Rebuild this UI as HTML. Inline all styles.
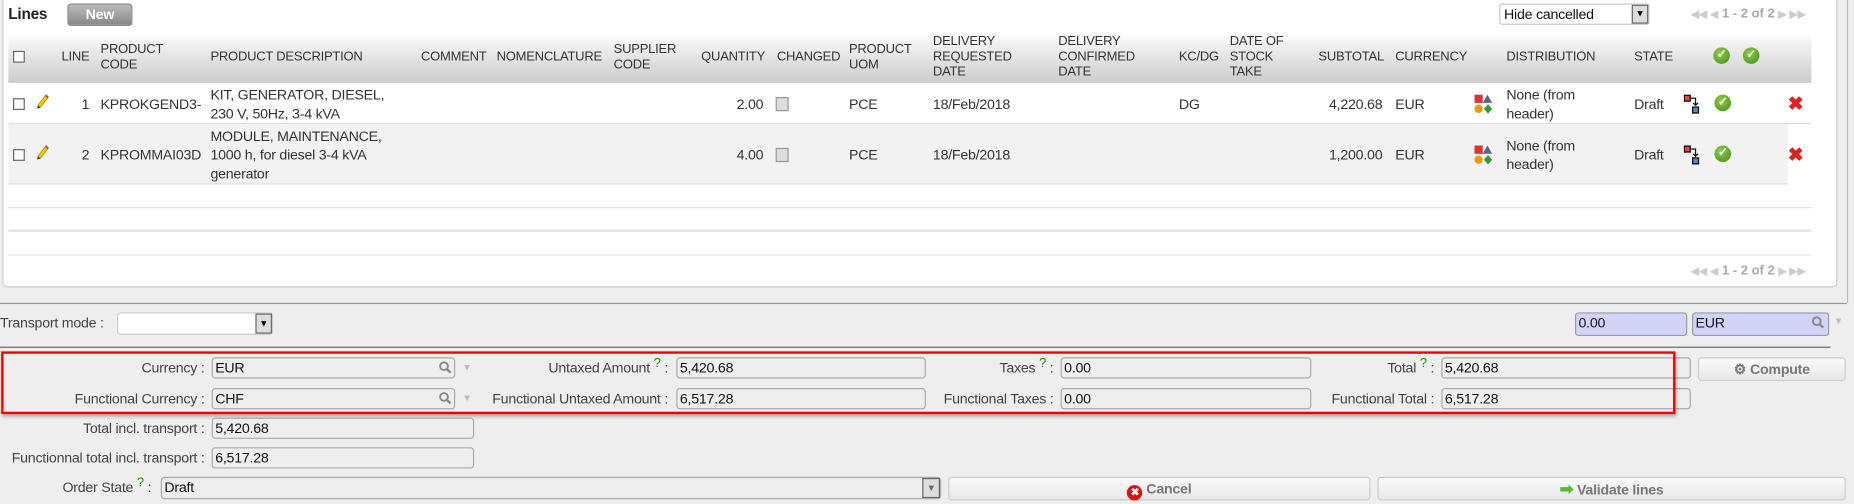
<!DOCTYPE html>
<html><head><meta charset="utf-8"><style>
html,body{margin:0;padding:0;width:1854px;height:504px;overflow:hidden;background:#efeeef}
#s{position:absolute;left:0;top:0;width:1568px;height:426px;transform:scale(1.18240,1.18310);transform-origin:0 0;font-family:"Liberation Sans",Arial,sans-serif;color:#333;font-size:12px;letter-spacing:-0.2px}
.a{position:absolute;white-space:nowrap}
.h{position:absolute;font-size:11px;color:#333;line-height:13px;text-transform:uppercase}
.f{position:absolute;height:18px;border:1px solid #aaa;border-radius:3px;background:#efeeef;box-sizing:border-box;font-size:12px;line-height:17px;padding-left:2px;color:#111}
.lb{position:absolute;text-align:right;font-size:12px;color:#444;line-height:18px;white-space:nowrap}
.q{color:#2a8a00;font-size:11px;vertical-align:top;position:relative;top:-4px}
.btn{position:absolute;height:19px;border:1px solid #ccc;border-radius:3px;background:linear-gradient(#fafafa,#e8e8e8);box-sizing:border-box;text-align:center;font-weight:bold;color:#777;font-size:12px;line-height:18px}
.chk{position:absolute;width:8px;height:8px;border:1px solid #666;background:#fff}
.ok{position:absolute;width:14px;height:14px;border-radius:50%;background:radial-gradient(circle at 40% 35%,#8fcf4a,#3f8a12);color:#fff;font-size:10px;line-height:14px;text-align:center;font-weight:bold}
.pg{position:absolute;font-size:11px;font-weight:bold;color:#aaa;letter-spacing:0}
.pg i{font-style:normal;color:#ccc;font-size:9px}
</style></head><body><div id="s">
<div class="a" style="left:2px;top:-3px;width:1550px;height:244px;background:#fff;border:1px solid #ccc;border-radius:4px"></div>
<div class="a" style="left:1562px;top:0;width:1px;height:256px;background:#bbb"></div>
<div class="a" style="left:7px;top:4px;font-weight:bold;font-size:13px;color:#222">Lines</div>
<div class="a" style="left:57px;top:3px;width:53px;height:17px;border:1px solid #888;border-radius:3px;background:linear-gradient(#bbb,#888);color:#fff;font-weight:bold;text-align:center;line-height:16px;font-size:12px">New</div>
<div class="a" style="left:1268px;top:3px;width:127px;height:18px;border:1px solid #ccc;border-radius:2px;background:#fff;font-size:12px;line-height:17px;padding-left:3px;box-sizing:border-box;color:#111">Hide cancelled</div>
<div class="a" style="left:1380px;top:4px;width:14px;height:16px;background:#ddd;border:1px solid #666;box-sizing:border-box;font-size:8px;text-align:center;line-height:14px;color:#000">▼</div>
<div class="pg" style="left:1430px;top:6px"><i>◀◀ ◀</i> 1 - 2 of 2 <i>▶ ▶▶</i></div>
<div class="a" style="left:7px;top:28px;width:1525px;height:42px;background:linear-gradient(#fff,#f2f2f2 20%,#ccc)"></div>
<div class="chk" style="left:11px;top:43px"></div>
<div class="h" style="left:52px;top:42px">Line</div>
<div class="h" style="left:85px;top:36px">Product<br>code</div>
<div class="h" style="left:178px;top:42px">Product description</div>
<div class="h" style="left:356px;top:42px">Comment</div>
<div class="h" style="left:420px;top:42px">Nomenclature</div>
<div class="h" style="left:519px;top:36px">Supplier<br>code</div>
<div class="h" style="left:593px;top:42px">Quantity</div>
<div class="h" style="left:657px;top:42px">Changed</div>
<div class="h" style="left:718px;top:36px">Product<br>UOM</div>
<div class="h" style="left:789px;top:29px">Delivery<br>requested<br>date</div>
<div class="h" style="left:895px;top:29px">Delivery<br>confirmed<br>date</div>
<div class="h" style="left:997px;top:42px">KC/DG</div>
<div class="h" style="left:1040px;top:29px">Date of<br>stock<br>take</div>
<div class="h" style="left:1115px;top:42px">Subtotal</div>
<div class="h" style="left:1180px;top:42px">Currency</div>
<div class="h" style="left:1274px;top:42px">Distribution</div>
<div class="h" style="left:1382px;top:42px">State</div>
<div class="ok" style="left:1449px;top:40px">✓</div>
<div class="ok" style="left:1474px;top:40px">✓</div>
<div class="a" style="left:7px;top:104px;width:1525px;height:1px;background:#ddd"></div>
<div class="a" style="left:7px;top:105px;width:1505px;height:50px;background:#f2f2f2;border-bottom:1px solid #ddd"></div>
<div class="a" style="left:7px;top:175px;width:1525px;height:1px;background:#e4e4e4"></div>
<div class="a" style="left:7px;top:194px;width:1525px;height:2px;background:#e4e4e4"></div>
<div class="a" style="left:7px;top:215px;width:1525px;height:1px;background:#e4e4e4"></div>
<div class="pg" style="left:1430px;top:223px"><i>◀◀ ◀</i> 1 - 2 of 2 <i>▶ ▶▶</i></div>

<div class="chk" style="left:11px;top:83px"></div>
<svg class="a" style="left:30px;top:79px" width="12" height="14"><path d="M9 1 L11 3 L4 12 L2 10Z" fill="#f0c800" stroke="#a80" stroke-width=".6"/><path d="M9 1 L11 3 L10.2 4 L8.2 2Z" fill="#d33"/><path d="M2 10 L4 12 L1.5 13Z" fill="#333"/></svg>
<div class="a" style="left:69px;top:81px">1</div><div class="a" style="left:85px;top:81px">KPROKGEND3-</div>
<div class="a" style="left:178px;top:72px;line-height:16px">KIT, GENERATOR, DIESEL,<br>230 V, 50Hz, 3-4 kVA</div>
<div class="a" style="left:623px;top:81px">2.00</div><div class="a" style="left:656px;top:82px;width:9px;height:10px;background:#ddd;border:1px solid #999"></div>
<div class="a" style="left:718px;top:81px">PCE</div><div class="a" style="left:789px;top:81px">18/Feb/2018</div>
<div class="a" style="left:997px;top:81px">DG</div><div class="a" style="left:1124px;top:81px">4,220.68</div><div class="a" style="left:1180px;top:81px">EUR</div>
<div class="a" style="left:1274px;top:72px;line-height:16px">None (from<br>header)</div><div class="a" style="left:1382px;top:81px">Draft</div>

<div class="chk" style="left:11px;top:126px"></div>
<svg class="a" style="left:30px;top:122px" width="12" height="14"><path d="M9 1 L11 3 L4 12 L2 10Z" fill="#f0c800" stroke="#a80" stroke-width=".6"/><path d="M9 1 L11 3 L10.2 4 L8.2 2Z" fill="#d33"/><path d="M2 10 L4 12 L1.5 13Z" fill="#333"/></svg>
<div class="a" style="left:69px;top:124px">2</div><div class="a" style="left:85px;top:124px">KPROMMAI03D</div>
<div class="a" style="left:178px;top:107px;line-height:16px">MODULE, MAINTENANCE,<br>1000 h, for diesel 3-4 kVA<br>generator</div>
<div class="a" style="left:623px;top:124px">4.00</div><div class="a" style="left:656px;top:125px;width:9px;height:10px;background:#ddd;border:1px solid #999"></div>
<div class="a" style="left:718px;top:124px">PCE</div><div class="a" style="left:789px;top:124px">18/Feb/2018</div>
<div class="a" style="left:1124px;top:124px">1,200.00</div><div class="a" style="left:1180px;top:124px">EUR</div>
<div class="a" style="left:1274px;top:115px;line-height:16px">None (from<br>header)</div><div class="a" style="left:1382px;top:124px">Draft</div>

<svg class="a" style="left:1247px;top:80px" width="16" height="16"><rect x="0" y="0" width="7" height="7" fill="#d33"/><path d="M11 0 L15 7 L7 7Z" fill="#568"/><circle cx="3.5" cy="12" r="3.5" fill="#e90"/><path d="M11.5 8 L15 12 L11.5 16 L8 12Z" fill="#393"/></svg>
<svg class="a" style="left:1247px;top:123px" width="16" height="16"><rect x="0" y="0" width="7" height="7" fill="#d33"/><path d="M11 0 L15 7 L7 7Z" fill="#568"/><circle cx="3.5" cy="12" r="3.5" fill="#e90"/><path d="M11.5 8 L15 12 L11.5 16 L8 12Z" fill="#393"/></svg>
<svg class="a" style="left:1424px;top:80px" width="14" height="17"><rect x="0.5" y="0.5" width="5" height="5" fill="#e43" stroke="#000"/><path d="M6 3 H10 V9 M8 7 L10 9 L12 7" stroke="#000" fill="none"/><rect x="7.5" y="10.5" width="5" height="5" fill="#58b" stroke="#000"/></svg>
<svg class="a" style="left:1424px;top:123px" width="14" height="17"><rect x="0.5" y="0.5" width="5" height="5" fill="#e43" stroke="#000"/><path d="M6 3 H10 V9 M8 7 L10 9 L12 7" stroke="#000" fill="none"/><rect x="7.5" y="10.5" width="5" height="5" fill="#58b" stroke="#000"/></svg>
<div class="ok" style="left:1450px;top:80px">✓</div><div class="ok" style="left:1450px;top:123px">✓</div>
<div class="a" style="left:1512px;top:78px;color:#d22;font-weight:bold;font-size:16px">✖</div>
<div class="a" style="left:1512px;top:121px;color:#d22;font-weight:bold;font-size:16px">✖</div>

<div class="a" style="left:0;top:256px;width:1562px;height:1px;background:#999"></div>
<div class="lb" style="left:0;top:264px">Transport mode :</div>
<div class="a" style="left:99px;top:264px;width:132px;height:19px;border:1px solid #ccc;border-radius:3px;background:#fff;box-sizing:border-box"></div>
<div class="a" style="left:216px;top:265px;width:14px;height:17px;background:#ddd;border:1px solid #666;box-sizing:border-box;font-size:8px;text-align:center;line-height:15px;color:#000">▼</div>
<div class="f" style="left:1332px;top:264px;width:95px;height:20px;background:#d3d3f8;border-color:#99a">0.00</div>
<div class="f" style="left:1431px;top:264px;width:116px;height:20px;background:#d3d3f8;border-color:#99a">EUR</div>
<svg class="a" style="left:1532px;top:267px" width="11" height="11"><circle cx="4.5" cy="4.5" r="3.3" fill="none" stroke="#888" stroke-width="1.6"/><path d="M7 7 L10 10" stroke="#888" stroke-width="2"/></svg>
<div class="a" style="left:1551px;top:267px;color:#bbb;font-size:8px">▼</div>
<div class="a" style="left:0;top:293px;width:1548px;height:1px;background:#666"></div>

<div class="lb" style="right:1395px;top:302px">Currency :</div>
<div class="f" style="left:179px;top:302px;width:206px">EUR</div>
<div class="lb" style="right:1395px;top:328px">Functional Currency :</div>
<div class="f" style="left:179px;top:328px;width:206px">CHF</div>
<svg class="a" style="left:371px;top:305px" width="11" height="11"><circle cx="4.5" cy="4.5" r="3.3" fill="none" stroke="#888" stroke-width="1.6"/><path d="M7 7 L10 10" stroke="#888" stroke-width="2"/></svg>
<svg class="a" style="left:371px;top:331px" width="11" height="11"><circle cx="4.5" cy="4.5" r="3.3" fill="none" stroke="#888" stroke-width="1.6"/><path d="M7 7 L10 10" stroke="#888" stroke-width="2"/></svg>
<div class="a" style="left:391px;top:306px;color:#bbb;font-size:8px">▼</div><div class="a" style="left:391px;top:332px;color:#bbb;font-size:8px">▼</div>
<div class="lb" style="right:1003px;top:302px">Untaxed Amount <span class="q">?</span> :</div>
<div class="f" style="left:572px;top:302px;width:211px">5,420.68</div>
<div class="lb" style="right:1003px;top:328px">Functional Untaxed Amount :</div>
<div class="f" style="left:572px;top:328px;width:211px">6,517.28</div>
<div class="lb" style="right:677px;top:302px">Taxes <span class="q">?</span> :</div>
<div class="f" style="left:897px;top:302px;width:212px">0.00</div>
<div class="lb" style="right:677px;top:328px">Functional Taxes :</div>
<div class="f" style="left:897px;top:328px;width:212px">0.00</div>
<div class="lb" style="right:355px;top:302px">Total <span class="q">?</span> :</div>
<div class="f" style="left:1219px;top:302px;width:211px">5,420.68</div>
<div class="lb" style="right:355px;top:328px">Functional Total :</div>
<div class="f" style="left:1219px;top:328px;width:211px">6,517.28</div>
<div class="a" style="left:1px;top:297px;width:1416px;height:53px;border:2px solid #e00;box-sizing:border-box;box-shadow:1px 2px 3px rgba(0,0,0,.3)"></div>
<div class="btn" style="left:1436px;top:302px;width:125px;height:20px">⚙ Compute</div>

<div class="lb" style="right:1395px;top:353px">Total incl. transport :</div>
<div class="f" style="left:179px;top:353px;width:222px">5,420.68</div>
<div class="lb" style="right:1395px;top:378px">Functionnal total incl. transport :</div>
<div class="f" style="left:179px;top:378px;width:222px">6,517.28</div>
<div class="lb" style="right:1440px;top:403px">Order State <span class="q">?</span> :</div>
<div class="f" style="left:136px;top:403px;width:660px;height:19px">Draft</div>
<div class="a" style="left:780px;top:404px;width:15px;height:17px;background:#ddd;border:1px solid #666;box-sizing:border-box;font-size:8px;text-align:center;line-height:15px;color:#666">▼</div>
<div class="btn" style="left:802px;top:403px;width:357px;height:20px"><span style="display:inline-block;width:13px;height:13px;border-radius:50%;background:#d11;color:#fff;font-size:9px;line-height:13px;vertical-align:-2px">✖</span> Cancel</div>
<div class="btn" style="left:1165px;top:403px;width:396px;height:20px"><span style="color:#5b3;font-size:14px">➡</span> Validate lines</div>
</div></body></html>
